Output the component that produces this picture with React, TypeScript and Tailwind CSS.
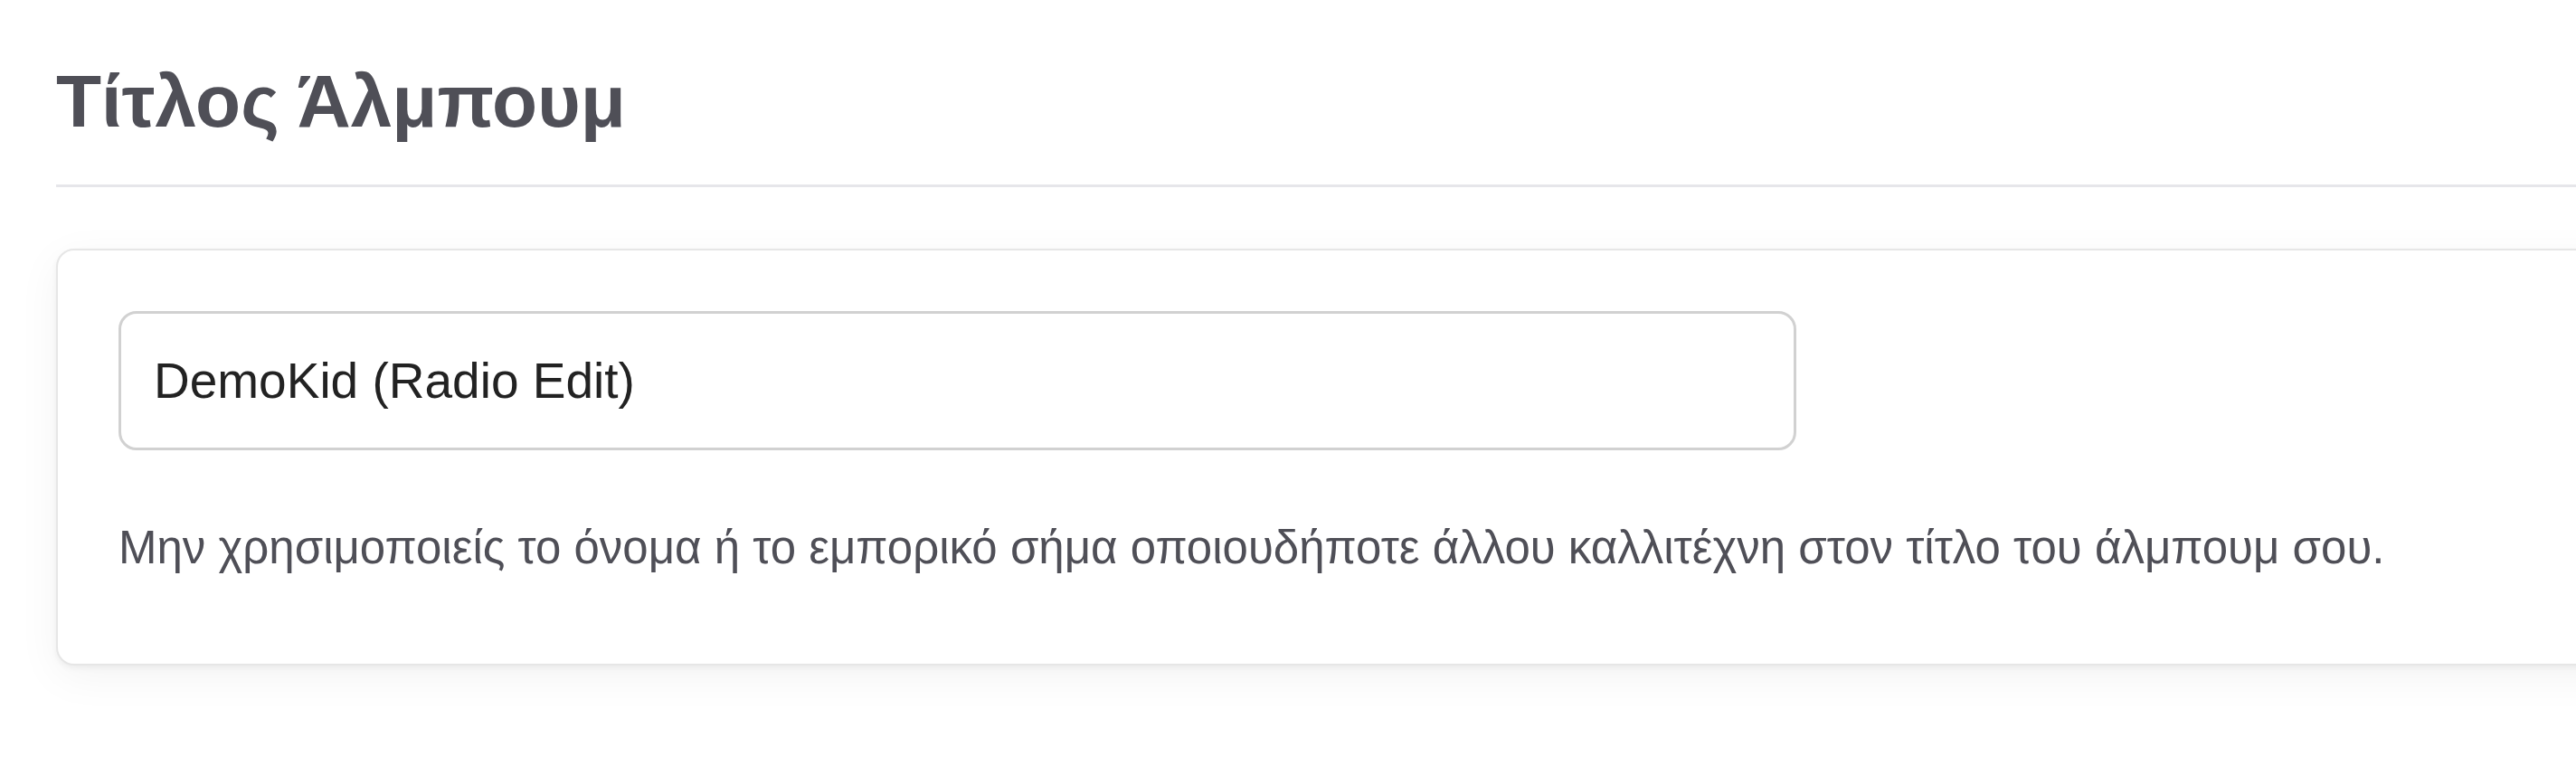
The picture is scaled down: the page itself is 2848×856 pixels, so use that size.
export default function App() {
  return (
    <div className="min-h-screen w-full overflow-hidden bg-white font-['Liberation_Sans',Arial,sans-serif]">
      <div className="pl-[62px] pt-[71px]">
        {/* Header */}
        <h1 className="text-[82px] font-bold leading-none text-[#4f4f57]">Τίτλος Άλμπουμ</h1>
        <div className="mt-[51px] h-[3px] bg-[#e6e6ea]" />

        {/* Card */}
        <div className="mt-[68px] -mr-[120px] rounded-[20px] border-2 border-[#e6e6e6] bg-white pl-[67px] pt-[67px] pb-[94px] shadow-[0_3px_6px_rgba(0,0,0,0.05),0_12px_48px_rgba(0,0,0,0.05)]">
          <input
            type="text"
            defaultValue="DemoKid (Radio Edit)"
            className="block h-[154px] w-[1855px] rounded-[20px] border-[3px] border-[#d1d1d1] bg-white px-[36px] text-[55px] text-[#222222] outline-none"
          />
          <p className="mt-[73px] text-[51px] leading-[69px] text-[#4f4f57]">
            Μην χρησιμοποιείς το όνομα ή το εμπορικό σήμα οποιουδήποτε άλλου καλλιτέχνη στον τίτλο του άλμπουμ σου.
          </p>
        </div>
      </div>
    </div>
  );
}
